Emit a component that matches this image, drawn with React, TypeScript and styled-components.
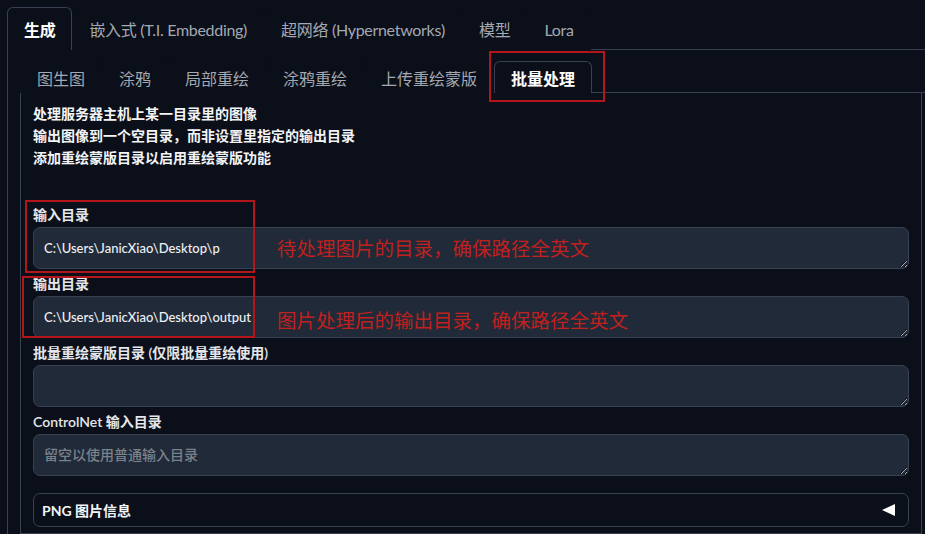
import React from 'react';
import styled, { createGlobalStyle } from 'styled-components';

const FONT = '"Lato", "Noto Sans CJK SC", "Noto Sans", sans-serif';

const GlobalStyle = createGlobalStyle`
  html, body {
    margin: 0;
    padding: 0;
    background: #0b0f19;
    overflow: hidden;
  }
  body {
    font-family: ${FONT};
    color: #e5e7eb;
  }
`;

const Page = styled.div`
  position: relative;
  display: flex;
  flex-direction: column;
  padding: 7px 0 0 7px;
  width: 935px;
  height: 534px;
  box-sizing: border-box;
`;

const TabBar = styled.div<{ $height: number; $tight?: boolean }>`
  display: flex;
  height: ${p => p.$height}px;
  border-bottom: 1px solid #374151;
  letter-spacing: ${p => (p.$tight ? '-0.3px' : 'normal')};
`;

const Tab = styled.div<{ $active?: boolean; $height: number }>`
  display: flex;
  align-items: center;
  height: ${p => p.$height + 1}px;
  box-sizing: border-box;
  padding: 0 16px;
  font-size: 16px;
  border: 1px solid ${p => (p.$active ? '#374151' : 'transparent')};
  border-bottom: none;
  border-radius: 6px 6px 0 0;
  background: #0b0f19;
  color: ${p => (p.$active ? '#ffffff' : '#a3a9b3')};
  font-weight: ${p => (p.$active ? 700 : 400)};
  margin-bottom: -1px;
  white-space: nowrap;
`;

const OuterPanel = styled.div`
  display: flex;
  flex-direction: column;
  flex: 1;
  border-left: 1px solid #374151;
  padding: 11px 0 0 12px;
`;

const InnerPanel = styled.div`
  display: flex;
  flex-direction: column;
  flex: 1;
  gap: 6px;
  border: 1px solid #374151;
  border-top: none;
  width: 902px;
  box-sizing: border-box;
  padding: 10px 12px 0 12px;
`;

const Notes = styled.div`
  font-size: 14px;
  font-weight: 600;
  line-height: 22px;
  color: #f3f4f6;
  margin-bottom: 31px;
`;

const Field = styled.div`
  display: flex;
  flex-direction: column;
  gap: 3px;
`;

const Label = styled.div`
  font-size: 14px;
  font-weight: 600;
  line-height: 18px;
  color: #e5e7eb;
`;

const Input = styled.textarea`
  display: block;
  height: 42px;
  box-sizing: border-box;
  width: 100%;
  resize: vertical;
  background: #212a38;
  border: 1px solid #374151;
  border-radius: 7px;
  padding: 10px 10px;
  font-family: ${FONT};
  font-size: 13px;
  font-weight: 500;
  line-height: 20px;
  color: #eef0f3;
  outline: none;
  overflow: hidden;
  &::placeholder {
    color: #7b818b;
    font-size: 14px;
  }
`;

const Accordion = styled.div`
  display: flex;
  align-items: center;
  justify-content: space-between;
  margin-top: 11px;
  height: 34px;
  box-sizing: border-box;
  border: 1px solid #374151;
  border-radius: 7px;
  padding: 0 13px 0 8px;
  font-size: 14px;
  font-weight: 700;
  color: #f3f4f6;
`;

const Mark = styled.div<{ $x: number; $y: number; $w: number; $h: number }>`
  position: absolute;
  left: ${p => p.$x}px;
  top: ${p => p.$y}px;
  width: ${p => p.$w}px;
  height: ${p => p.$h}px;
  border: 2px solid #b3161a;
  box-sizing: border-box;
  pointer-events: none;
`;

const Note = styled.div<{ $x: number; $y: number }>`
  position: absolute;
  left: ${p => p.$x}px;
  top: ${p => p.$y}px;
  font-family: "Noto Sans CJK SC", sans-serif;
  font-size: 19.5px;
  line-height: 24px;
  color: #c0201e;
  white-space: nowrap;
  pointer-events: none;
`;

const outerTabs = ['生成', '嵌入式 (T.I. Embedding)', '超网络 (Hypernetworks)', '模型', 'Lora'];
const innerTabs = ['图生图', '涂鸦', '局部重绘', '涂鸦重绘', '上传重绘蒙版', '批量处理'];

const fields = [
  { label: '输入目录', value: 'C:\\Users\\JanicXiao\\Desktop\\p' },
  { label: '输出目录', value: 'C:\\Users\\JanicXiao\\Desktop\\output' },
  { label: '批量重绘蒙版目录 (仅限批量重绘使用)', value: '' },
  { label: 'ControlNet 输入目录', value: '', placeholder: '留空以使用普通输入目录' },
];

export default function App() {
  return (
    <>
      <GlobalStyle />
      <Page>
        <TabBar $height={42} $tight>
          {outerTabs.map((t, i) => (
            <Tab key={t} $active={i === 0} $height={42}>{t}</Tab>
          ))}
        </TabBar>
        <OuterPanel>
          <TabBar $height={31}>
            {innerTabs.map((t, i) => (
              <Tab key={t} $active={i === innerTabs.length - 1} $height={31}>{t}</Tab>
            ))}
          </TabBar>
          <InnerPanel>
            <Notes>
              <div>处理服务器主机上某一目录里的图像</div>
              <div>输出图像到一个空目录，而非设置里指定的输出目录</div>
              <div>添加重绘蒙版目录以启用重绘蒙版功能</div>
            </Notes>
            {fields.map(f => (
              <Field key={f.label}>
                <Label>{f.label}</Label>
                <Input readOnly defaultValue={f.value} placeholder={f.placeholder} />
              </Field>
            ))}
            <Accordion>
              <span>PNG 图片信息</span>
              <svg width="13" height="12" viewBox="0 0 13 12">
                <polygon points="0,6 13,0 13,12" fill="#ffffff" />
              </svg>
            </Accordion>
          </InnerPanel>
        </OuterPanel>

        {/* red annotation overlays */}
        <Mark $x={489} $y={51} $w={116} $h={51} />
        <Mark $x={25} $y={200} $w={230} $h={73} />
        <Mark $x={22} $y={276} $w={233} $h={62} />
        <Note $x={277} $y={236}>待处理图片的目录，确保路径全英文</Note>
        <Note $x={277} $y={308}>图片处理后的输出目录，确保路径全英文</Note>
      </Page>
    </>
  );
}
